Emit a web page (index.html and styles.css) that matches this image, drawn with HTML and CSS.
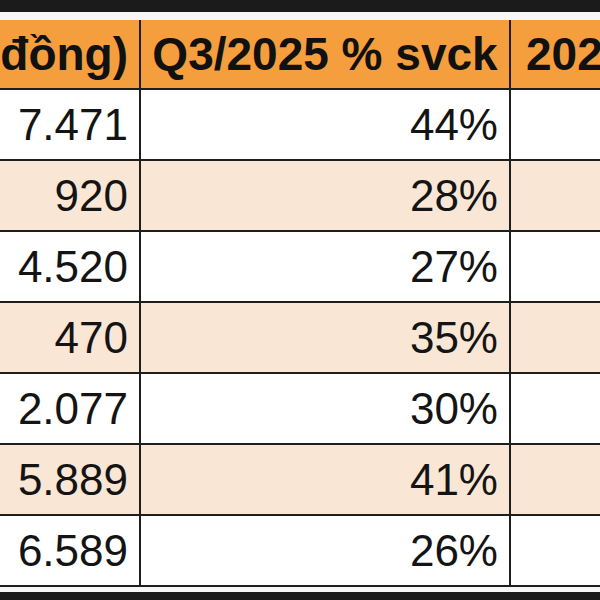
FILE: index.html
```html
<!DOCTYPE html>
<html lang="vi">
<head>
<meta charset="utf-8">
<link rel="stylesheet" href="styles.css">
</head>
<body>
<div class="topbar"></div>
<div class="strip"></div>
<div class="sheet">
  <div class="cell head right">Doanh thu (tỷ đồng)</div>
  <div class="cell head center">Q3/2025 % svck</div>
  <div class="cell head left">2025F % svck</div>

  <div class="cell right">7.471</div><div class="cell right">44%</div><div class="cell"></div>
  <div class="cell alt right">920</div><div class="cell alt right">28%</div><div class="cell alt"></div>
  <div class="cell right">4.520</div><div class="cell right">27%</div><div class="cell"></div>
  <div class="cell alt right">470</div><div class="cell alt right">35%</div><div class="cell alt"></div>
  <div class="cell right">2.077</div><div class="cell right">30%</div><div class="cell"></div>
  <div class="cell alt right">5.889</div><div class="cell alt right">41%</div><div class="cell alt"></div>
  <div class="cell right">6.589</div><div class="cell right">26%</div><div class="cell"></div>
</div>
<div class="strip small"></div>
<div class="bottombar"></div>
</body>
</html>
```

FILE: styles.css
```css
html, body {
  margin: 0;
  padding: 0;
  width: 600px;
  height: 600px;
  overflow: hidden;
  background: #ffffff;
}

.topbar {
  height: 12px;
  background: #1b1b1b;
}

.strip {
  height: 8px;
  background: #f7f7f7;
}

.strip.small {
  height: 5px;
}

.bottombar {
  height: 20px;
  background: #1b1b1b;
}

.sheet {
  display: grid;
  grid-template-columns: 139px 368px 1fr;
  grid-template-rows: 68px repeat(7, 69px);
  gap: 2px;
  padding-bottom: 2px;
  background: #1e1e1e;
  font-family: "Liberation Sans", Arial, sans-serif;
  font-size: 44px;
  color: #141414;
}

.cell {
  background: #ffffff;
  display: flex;
  align-items: center;
  white-space: nowrap;
  overflow: hidden;
}

.cell.alt {
  background: #fae6d4;
}

.cell.head {
  background: #f59e3e;
  font-weight: bold;
  font-size: 46px;
  color: #111111;
}

.right {
  justify-content: flex-end;
  padding-right: 11px;
}

.center {
  justify-content: center;
}

.left {
  justify-content: flex-start;
  padding-left: 15px;
}
```
